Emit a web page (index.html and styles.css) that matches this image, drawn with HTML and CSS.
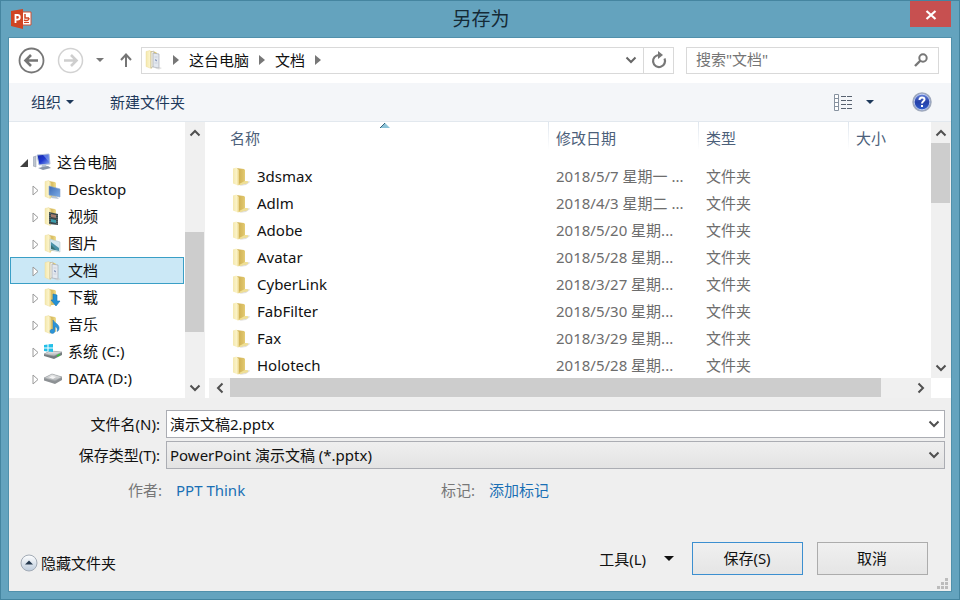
FILE: index.html
```html
<!DOCTYPE html>
<html lang="zh-CN">
  <head>
    <meta charset="utf-8">
    <title>另存为</title>
    <meta name="viewport" content="width=device-width, initial-scale=1.0">
    <link rel="stylesheet" href="styles.css">
  </head>
  <body>
    <svg class="defs" width="0" height="0" aria-hidden="true">
      <defs>
        <linearGradient id="g-back" x1="0" x2="1"><stop offset="0" stop-color="#f4e8ae"/><stop offset=".6" stop-color="#fbf3c8"/><stop offset="1" stop-color="#e9d384"/></linearGradient>
        <linearGradient id="g-front" x1="0" x2="1"><stop offset="0" stop-color="#c9a94a"/><stop offset=".6" stop-color="#ddc268"/><stop offset="1" stop-color="#f1e093"/></linearGradient>
        <linearGradient id="g-screen" x1="0" x2="1" y2="1"><stop offset="0" stop-color="#1324a4"/><stop offset=".5" stop-color="#2039cf"/><stop offset="1" stop-color="#93b8f0"/></linearGradient>
        <linearGradient id="g-desk" x1="0" x2="1" y2="1"><stop offset="0" stop-color="#3c69b4"/><stop offset="1" stop-color="#7eaee8"/></linearGradient>
        <linearGradient id="g-help" x2="0" y2="1"><stop offset="0" stop-color="#6f8ce0"/><stop offset=".5" stop-color="#2440a8"/><stop offset="1" stop-color="#2f5fd0"/></linearGradient>
        <linearGradient id="g-disk" x2="0" y2="1"><stop offset="0" stop-color="#f0f0f0"/><stop offset="1" stop-color="#a9adb0"/></linearGradient>
        <linearGradient id="g-round" x2="0" y2="1"><stop offset="0" stop-color="#ffffff"/><stop offset="1" stop-color="#bccbdc"/></linearGradient>
      </defs>
      <symbol id="folder" viewBox="0 0 18 20">
        <path d="M12 16l5-2 1 1-4 3-7 1z" fill="#cfccc4" opacity=".6"/>
        <path d="M4 1l8 1 1 1v11l3 .500v1.500L7 18H5z" fill="url(#g-front)"/>
        <path d="M7 17l6-3 3 .500v1.500l-8 2z" fill="#efdf96"/>
        <path d="M1 1.500L4.500.500 7 3v15l-1 .500-5-2z" fill="url(#g-back)"/>
      </symbol>
      <symbol id="base" viewBox="0 0 18 20">
        <path d="M4 1l7 1 1 1v14H5z" fill="url(#g-front)"/>
        <path d="M1 1.500L5 .500 7 3v15l-1 .500-5-2z" fill="url(#g-back)" stroke="#ead994" stroke-width=".4"/>
      </symbol>
      <symbol id="docs" viewBox="0 0 18 20">
        <use href="#base"/>
        <path d="M6 2l3-1v15l-3 2z" fill="#f5f2e2" stroke="#aaa79a" stroke-width=".5"/>
        <path d="M8 3l6 1v14l-6-1z" fill="#e3e8ef" stroke="#9aa0aa" stroke-width=".6"/>
        <path d="M9.500 7h3M9.500 13h3" stroke="#ccd1da"/>
        <path d="M10 9l2 1v1.500l-2-1z" fill="#8c9bbd"/>
        <path d="M14 17l3 1-3 1.500-4-1z" fill="#ccc" opacity=".6"/>
      </symbol>
      <symbol id="desktop" viewBox="0 0 18 20">
        <use href="#base"/>
        <path d="M5 6l11 3v8L5 15z" fill="url(#g-desk)" stroke="#83a3cf" stroke-width=".6"/>
        <path d="M8 16l5 1 2 2-8-1z" fill="#b9c5d4"/>
      </symbol>
      <symbol id="video" viewBox="0 0 18 20">
        <use href="#base"/>
        <path d="M5 5l9 2v11l-9-1z" fill="#39474b"/>
        <path d="M7 7l5 1v3L7 10z" fill="#a27b6d"/>
        <path d="M7 12l5 1v3l-5-1z" fill="#3c9cab"/>
        <path d="M6 6v11M13 8v10" stroke="#6f7c7e" stroke-dasharray="1 1"/>
      </symbol>
      <symbol id="picture" viewBox="0 0 18 20">
        <use href="#base"/>
        <path d="M6 5l10 3v10L6 16z" fill="#d4e8f1" stroke="#b9c9cf" stroke-width=".6"/>
        <path d="M7 8l8 6v3l-8-2z" fill="#4a92a8"/>
        <path d="M7 11l5 5-5-1z" fill="#366f70"/>
      </symbol>
      <symbol id="download" viewBox="0 0 18 20">
        <use href="#base"/>
        <path d="M9 6l4 1v6h3l-4 5-5-6h2z" fill="#2491d4" stroke="#1876b4" stroke-width=".6"/>
      </symbol>
      <symbol id="music" viewBox="0 0 18 20">
        <use href="#base"/>
        <path d="M9 5c1 3 7 4 6 9-.3 1.500-1 2-2 2.500.8-2.500 0-4-2-5v4c0 4-5 3.500-5 1 0-2 1.500-2.500 3-2z" fill="#2c94d8" stroke="#2679b5" stroke-width=".5"/>
      </symbol>
      <symbol id="computer" viewBox="0 0 19 18">
        <path d="M0 4l3-1v11l-3-1z" fill="#bcc4ce" stroke="#929ba8" stroke-width=".5"/>
        <path d="M4 2l12-1 1 10-11 1z" fill="url(#g-screen)" stroke="#b6c6dc"/>
        <path d="M10 2l6-.5.500 8z" fill="#8aaaf0" opacity=".6"/>
        <path d="M9 12h4l2 3-7 1z" fill="#b7c4d3"/>
        <path d="M5 15l10-2 3 2-8 2z" fill="#8795a8"/>
      </symbol>
      <symbol id="disk" viewBox="0 0 20 13">
        <path d="M1 6l8-4 10 3v3l-7 4L1 8.500z" fill="#8d9194"/>
        <path d="M1 6l8-4 10 3-7 4z" fill="url(#g-disk)" stroke="#9b9fa2" stroke-width=".6"/>
        <path d="M6 5.500l3-1.500 4 1-3 2z" fill="#fff" opacity=".8"/>
      </symbol>
      <symbol id="win" viewBox="0 0 20 18">
        <path d="M1 11l6-3 12 1v3l-8 4-10-3z" fill="#767d80"/>
        <path d="M1 11l6-3 12 1-8 4z" fill="url(#g-disk)" stroke="#9b9fa2" stroke-width=".5"/>
        <path d="M14 13l3-1.500" stroke="#39c93c" stroke-width="1.500"/>
        <path d="M1 2l3.500-.500v3H1zM5.500 1.300L10 1v3.500H5.500zM1 5.500h3.500v3L1 8zM5.500 5.500H10V9l-4.500-.400z" fill="#22bfe8"/>
      </symbol>
      <symbol id="down" viewBox="0 0 12 8"><path d="M1.500 1.500L6 6l4.500-4.500" fill="none" stroke="currentColor" stroke-width="2"/></symbol>
      <symbol id="up" viewBox="0 0 12 8"><path d="M1.500 6.500L6 2l4.500 4.500" fill="none" stroke="currentColor" stroke-width="2"/></symbol>
      <symbol id="left" viewBox="0 0 8 12"><path d="M6.500 1.500L2 6l4.500 4.500" fill="none" stroke="currentColor" stroke-width="2"/></symbol>
      <symbol id="right" viewBox="0 0 8 12"><path d="M1.500 1.500L6 6l-4.500 4.500" fill="none" stroke="currentColor" stroke-width="2"/></symbol>
      <symbol id="caret" viewBox="0 0 8 4"><path d="M0 0h8L4 4z" fill="currentColor"/></symbol>
      <symbol id="crumb" viewBox="0 0 6 10"><path d="M0 0l6 5-6 5z" fill="#777"/></symbol>
      <symbol id="closed" viewBox="0 0 7 11"><path d="M1 1l5 4.500L1 10z" fill="#fff" stroke="#9a9a9a"/></symbol>
      <symbol id="open" viewBox="0 0 8 8"><path d="M8 0v8H0z" fill="#404040"/></symbol>
    </svg>

    <div class="window">
      <header class="titlebar">
        <svg class="app-icon" width="21" height="20" viewBox="0 0 21 20">
          <path d="M11 3h9v13h-9z" fill="#fff" stroke="#d25033"/>
          <path d="M14 5v4h4M18 9c0 3-3 3-5 2" fill="none" stroke="#d04525" stroke-width="1.500"/>
          <path d="M13 13.500h5" stroke="#d04525"/>
          <path d="M0 2l12-2v20L0 17z" fill="#d04423"/>
          <path d="M4.500 14V6h2a2.300 2.300 0 0 1 0 4.600h-2" fill="none" stroke="#fff" stroke-width="1.800"/>
        </svg>
        <h1>另存为</h1>
        <button class="close" aria-label="关闭"><svg width="12" height="10" viewBox="0 0 12 10"><path d="M1.500 1l9 8M10.500 1l-9 8" stroke="#fff" stroke-width="2.200"/></svg></button>
      </header>

      <main class="content">
        <nav class="navbar">
          <button class="plain" aria-label="后退"><svg width="27" height="27" viewBox="0 0 27 27"><circle cx="13.500" cy="13.500" r="12" fill="#fff" stroke="#777" stroke-width="1.800"/><path d="M20 13.500H8M13 8l-5.500 5.500L13 19" fill="none" stroke="#757575" stroke-width="2.600"/></svg></button>
          <button class="plain forward" aria-label="前进"><svg width="27" height="27" viewBox="0 0 27 27"><circle cx="13.500" cy="13.500" r="12" fill="#fff" stroke="#d2d2d2" stroke-width="1.500"/><path d="M7 13.500h12M14 8l5.500 5.500L14 19" fill="none" stroke="#cecece" stroke-width="2.600"/></svg></button>
          <button class="plain recent" aria-label="最近位置"><svg width="8" height="4"><use href="#caret"/></svg></button>
          <button class="plain parent" aria-label="上移"><svg width="12" height="14" viewBox="0 0 12 14"><path d="M6 14V2M1 7l5-5.500L11 7" fill="none" stroke="#757575" stroke-width="2"/></svg></button>
          <div class="address">
            <svg width="18" height="20"><use href="#docs"/></svg>
            <svg width="6" height="10"><use href="#crumb"/></svg>
            <a href="#">这台电脑</a>
            <svg width="6" height="10"><use href="#crumb"/></svg>
            <a href="#">文档</a>
            <svg width="6" height="10"><use href="#crumb"/></svg>
            <button class="plain history" aria-label="以前的位置"><svg width="12" height="8"><use href="#down"/></svg></button>
            <button class="plain refresh" aria-label="刷新"><svg width="16" height="18" viewBox="0 0 16 18"><path d="M13.500 7.500A6 6 0 1 1 8 4" fill="none" stroke="#777" stroke-width="2.200"/><path d="M7 0l5 4-5 4z" fill="#777"/></svg></button>
          </div>
          <div class="search">
            <input type="text" aria-label="搜索" placeholder='搜索"文档"'>
            <svg width="14" height="14" viewBox="0 0 14 14"><circle cx="9" cy="5" r="3.700" fill="none" stroke="#777" stroke-width="2"/><path d="M6.500 7.500L1 13" stroke="#777" stroke-width="2.400"/></svg>
          </div>
        </nav>

        <div class="toolbar">
          <button class="plain">组织 <svg width="8" height="4"><use href="#caret"/></svg></button>
          <button class="plain create">新建文件夹</button>
          <button class="plain view" aria-label="更改视图">
            <svg width="20" height="17" viewBox="0 0 20 17"><path d="M1.500.500h4v16h-4zM1 4.500h5M1 8.500h5M1 12.500h5" fill="#fff" stroke="#8792a0"/><path d="M8 2.500h12M8 6.500h12M8 10.500h12M8 14.500h12" stroke="#586270" stroke-dasharray="5 1"/></svg>
            <svg width="8" height="4"><use href="#caret"/></svg>
          </button>
          <button class="plain help" aria-label="帮助"><svg width="20" height="20" viewBox="0 0 20 20"><circle cx="10" cy="10" r="9" fill="url(#g-help)" stroke="#9fa9bc" stroke-width="1.500"/><circle cx="10" cy="10" r="7.800" fill="none" stroke="#dce5fa" stroke-width=".8"/><path d="M7.500 8c0-3.500 5-3.300 5-.5 0 1.800-2.500 1.800-2.500 4" fill="none" stroke="#fff" stroke-width="2"/><path d="M9 13h2v2H9z" fill="#fff"/></svg></button>
        </div>

        <div class="panes">
          <div class="tree-pane">
            <ul class="tree">
              <li class="root"><svg width="8" height="8"><use href="#open"/></svg><svg width="19" height="18"><use href="#computer"/></svg>这台电脑</li>
              <li><svg width="7" height="11"><use href="#closed"/></svg><svg class="icon" width="18" height="20"><use href="#desktop"/></svg>Desktop</li>
              <li><svg width="7" height="11"><use href="#closed"/></svg><svg class="icon" width="18" height="20"><use href="#video"/></svg>视频</li>
              <li><svg width="7" height="11"><use href="#closed"/></svg><svg class="icon" width="18" height="20"><use href="#picture"/></svg>图片</li>
              <li class="selected"><svg width="7" height="11"><use href="#closed"/></svg><svg class="icon" width="18" height="20"><use href="#docs"/></svg>文档</li>
              <li><svg width="7" height="11"><use href="#closed"/></svg><svg class="icon" width="18" height="20"><use href="#download"/></svg>下载</li>
              <li><svg width="7" height="11"><use href="#closed"/></svg><svg class="icon" width="18" height="20"><use href="#music"/></svg>音乐</li>
              <li><svg width="7" height="11"><use href="#closed"/></svg><svg class="icon" width="20" height="18"><use href="#win"/></svg>系统 (C:)</li>
              <li><svg width="7" height="11"><use href="#closed"/></svg><svg class="icon" width="20" height="13"><use href="#disk"/></svg>DATA (D:)</li>
            </ul>
            <div class="vscroll">
              <button class="plain" aria-label="向上滚动"><svg width="12" height="8"><use href="#up"/></svg></button>
              <div class="track tree-track"><div class="thumb"></div></div>
              <button class="plain" aria-label="向下滚动"><svg width="12" height="8"><use href="#down"/></svg></button>
            </div>
          </div>

          <div class="list-pane">
            <div class="files">
              <table>
                <thead>
                  <tr>
                    <th class="name">名称<svg class="sort" width="10" height="5" viewBox="0 0 10 5"><path d="M0 5l5-5 5 5z" fill="#8cc3d8"/><path d="M0 5l5-5" stroke="#39647c"/></svg></th>
                    <th class="date">修改日期</th>
                    <th class="type">类型</th>
                    <th>大小</th>
                  </tr>
                </thead>
                <tbody>
                  <tr><td><svg width="18" height="20"><use href="#folder"/></svg>3dsmax</td><td>2018/5/7 星期一 ...</td><td>文件夹</td><td></td></tr>
                  <tr><td><svg width="18" height="20"><use href="#folder"/></svg>Adlm</td><td>2018/4/3 星期二 ...</td><td>文件夹</td><td></td></tr>
                  <tr><td><svg width="18" height="20"><use href="#folder"/></svg>Adobe</td><td>2018/5/20 星期...</td><td>文件夹</td><td></td></tr>
                  <tr><td><svg width="18" height="20"><use href="#folder"/></svg>Avatar</td><td>2018/5/28 星期...</td><td>文件夹</td><td></td></tr>
                  <tr><td><svg width="18" height="20"><use href="#folder"/></svg>CyberLink</td><td>2018/3/27 星期...</td><td>文件夹</td><td></td></tr>
                  <tr><td><svg width="18" height="20"><use href="#folder"/></svg>FabFilter</td><td>2018/5/30 星期...</td><td>文件夹</td><td></td></tr>
                  <tr><td><svg width="18" height="20"><use href="#folder"/></svg>Fax</td><td>2018/3/29 星期...</td><td>文件夹</td><td></td></tr>
                  <tr><td><svg width="18" height="20"><use href="#folder"/></svg>Holotech</td><td>2018/5/28 星期...</td><td>文件夹</td><td></td></tr>
                </tbody>
              </table>
            </div>
            <div class="vscroll">
              <button class="plain" aria-label="向上滚动"><svg width="12" height="8"><use href="#up"/></svg></button>
              <div class="track list-track"><div class="thumb"></div></div>
              <button class="plain" aria-label="向下滚动"><svg width="12" height="8"><use href="#down"/></svg></button>
            </div>
            <div class="hscroll">
              <button class="plain" aria-label="向左滚动"><svg width="8" height="12"><use href="#left"/></svg></button>
              <div class="track"><div class="thumb"></div></div>
              <button class="plain" aria-label="向右滚动"><svg width="8" height="12"><use href="#right"/></svg></button>
            </div>
          </div>
        </div>

        <form class="details">
          <div class="fields">
            <label for="filename">文件名(N):</label>
            <div class="combo">
              <input type="text" id="filename" value="演示文稿2.pptx">
              <svg width="12" height="8"><use href="#down"/></svg>
            </div>
            <label for="filetype">保存类型(T):</label>
            <div class="combo">
              <select id="filetype"><option>PowerPoint 演示文稿 (*.pptx)</option></select>
              <svg width="12" height="8"><use href="#down"/></svg>
            </div>
          </div>
          <dl class="meta">
            <dt>作者:</dt><dd><a href="#">PPT Think</a></dd>
            <dt>标记:</dt><dd><a href="#">添加标记</a></dd>
          </dl>
          <div class="actions">
            <button type="button" class="plain hide"><svg width="18" height="18" viewBox="0 0 18 18"><circle cx="9" cy="9" r="8" fill="url(#g-round)" stroke="#a2abb6"/><path d="M5 10.500L9 6.500l4 4z" fill="#24384e"/></svg>隐藏文件夹</button>
            <button type="button" class="plain tools">工具(L)<svg width="10" height="5"><use href="#caret"/></svg></button>
            <button type="button" class="push default">保存(S)</button>
            <button type="button" class="push">取消</button>
          </div>
          <svg class="grip" width="11" height="11" viewBox="0 0 11 11"><path d="M8 0h3v3H8zM4 4h3v3H4zM8 4h3v3H8zM0 8h3v3H0zM4 8h3v3H4zM8 8h3v3H8z" fill="#bcbcbc"/></svg>
        </form>
      </main>
    </div>
  </body>
</html>
```

FILE: styles.css
```css
* {
  box-sizing:border-box;
}

body {
  margin:0;
  color:#111;
  font:15px/20px 'Noto Sans', 'Noto Sans CJK SC', sans-serif;
}

svg {
  flex:none;
}

a {
  color:#1a6fb5;
  text-decoration:none;
}

button, input, select {
  font:inherit;
  color:inherit;
}

.defs {
  position:absolute;
}

.window {
  display:flex;
  flex-direction:column;
  min-height:100vh;
  padding:0 8px 8px;
  background:#64a3be;
  border:1px solid #4585a0;
}

.titlebar {
  display:grid;
  grid-template-columns:1fr auto 1fr;
  height:37px;
  padding-left:2px;
}

.titlebar h1 {
  margin:0;
  color:#152a36;
  font-size:19px;
  font-weight:normal;
  line-height:36px;
}

.app-icon {
  margin-top:8px;
}

.close {
  width:41px;
  height:26px;
  padding:0;
  justify-self:end;
  background:#c75050;
  border:0;
}

.content {
  display:flex;
  flex-direction:column;
  flex:1;
  background:#efefef;
  outline:1px solid #5190ab;
}

.plain {
  display:flex;
  align-items:center;
  padding:0;
  border:0;
  background:none;
}

.navbar {
  display:flex;
  align-items:center;
  height:45px;
  padding:0 12px 1px 9px;
  background:#fff;
}

.forward {
  margin:0 12px;
}

.recent {
  color:#777;
}

.parent {
  margin:0 9px 0 16px;
}

.address {
  display:flex;
  align-items:center;
  flex:1;
  height:27px;
  padding-left:3px;
  border:1px solid #d9d9d9;
}

.address a {
  margin:0 10px 1px;
  color:#111;
}

.address svg:first-child {
  margin-right:10px;
}

.history {
  width:24px;
  justify-content:center;
  margin-left:auto;
  color:#666;
}

.address .refresh {
  width:30px;
  height:25px;
  justify-content:center;
  border-left:1px solid #d9d9d9;
}

.refresh svg:first-child {
  margin:0;
}

.history svg:first-child {
  margin:0;
}

.search {
  display:flex;
  align-items:center;
  width:253px;
  height:27px;
  margin-left:12px;
  padding:0 10px 0 9px;
  border:1px solid #d9d9d9;
}

.search input {
  flex:1;
  min-width:0;
  padding:0 0 2px;
  border:0;
  outline:0;
}

.search input::placeholder {
  color:#757575;
}

.toolbar {
  display:flex;
  align-items:center;
  height:39px;
  padding:0 19px 0 22px;
  color:#1e395b;
  background:#f4f6f9;
  border-bottom:1px solid #e2e8ee;
}

.toolbar .plain {
  gap:5px;
}

.toolbar .create {
  margin-left:36px;
}

.toolbar .view {
  gap:13px;
  margin-left:auto;
}

.toolbar .help {
  margin-left:38px;
}

.panes {
  display:flex;
  height:276px;
  background:#fff;
}

.tree-pane {
  display:flex;
  width:196px;
}

.tree {
  flex:1;
  margin:0;
  padding:27px 1px 0;
  list-style:none;
}

.tree li {
  display:flex;
  align-items:center;
  height:27px;
  padding:0 0 2px 21px;
  border:1px solid transparent;
}

.tree li svg:first-child {
  margin-top:3px;
}

.tree .root {
  gap:5px;
  padding-left:9px;
}

.tree .icon {
  margin:2px 5px 0 4px;
  width:20px;
}

.tree .selected {
  background:#cbe8f6;
  border-color:#3a9fc6;
}

.vscroll {
  display:flex;
  flex-direction:column;
  width:20px;
  padding-right:1px;
  background:#f0f0f0;
  color:#505050;
}

.vscroll .plain {
  height:21px;
  justify-content:center;
}

.track {
  flex:1;
}

.thumb {
  background:#cdcdcd;
}

.tree-track {
  padding-top:89px;
}

.tree-track .thumb {
  height:100px;
}

.list-track .thumb {
  height:60px;
}

.list-pane {
  display:grid;
  grid-template-columns:1fr 20px;
  grid-template-rows:1fr 20px;
  flex:1;
  min-width:0;
  margin-left:4px;
}

.files {
  min-height:0;
  overflow:hidden;
}

.files table {
  width:100%;
  table-layout:fixed;
  border-collapse:collapse;
}

.files th {
  position:relative;
  height:41px;
  padding:6px 0 0 7px;
  color:#4c607a;
  font-weight:normal;
  text-align:left;
  vertical-align:top;
  background:linear-gradient(#dfe6ee, #fff) right top / 1px 28px no-repeat;
}

.files th:last-child {
  background:none;
}

.files .name {
  width:340px;
  padding-left:21px;
}

.files .date, .files .type {
  width:150px;
}

.sort {
  position:absolute;
  top:1px;
  left:calc(50% + 1px);
}

.files td {
  height:27px;
  padding:0 0 2px 7px;
  color:#6d6d6d;
  white-space:nowrap;
}

.files td:first-child {
  padding:0 0 0 23px;
  color:#111;
}

.files td svg {
  margin-right:7px;
  vertical-align:middle;
}

.hscroll {
  display:flex;
  background:#f0f0f0;
  color:#505050;
}

.hscroll .plain {
  width:21px;
  justify-content:center;
}

.hscroll .track {
  padding-right:29px;
}

.hscroll .thumb {
  height:19px;
}

.details {
  position:relative;
  display:flex;
  flex-direction:column;
  flex:1;
  padding:12px 6px 16px 0;
}

.fields {
  display:grid;
  grid-template-columns:151px 1fr;
  gap:3px 6px;
  align-items:center;
}

.fields label {
  text-align:right;
}

.combo {
  position:relative;
}

.combo input, .combo select {
  display:block;
  width:100%;
  height:28px;
  padding:0 24px 0 3px;
  border:1px solid #abadb3;
  border-radius:0;
  background:#fff;
  appearance:none;
}

.combo input {
  padding-bottom:2px;
}

.combo select {
  background:linear-gradient(#efefef, #e3e3e3);
}

.combo svg {
  position:absolute;
  top:10px;
  right:5px;
  color:#505050;
  pointer-events:none;
}

.meta {
  display:grid;
  grid-template-columns:153px 153px 160px 1fr;
  margin:11px 0 0;
}

.meta dt {
  color:#777;
  text-align:right;
}

.meta dd {
  margin:0;
  padding-left:14px;
}

.actions {
  display:flex;
  align-items:center;
  margin-top:auto;
  padding:0 17px 0 11px;
}

.hide {
  gap:3px;
  margin:8px auto 0 0;
}

.tools {
  gap:18px;
  margin-right:18px;
}

.push {
  width:111px;
  height:33px;
  padding:0 1px 2px 0;
  background:linear-gradient(#f0f0f0, #e5e5e5);
  border:1px solid #acacac;
}

.default {
  margin-right:14px;
  border-color:#3c8fd0;
}

.grip {
  position:absolute;
  right:3px;
  bottom:2px;
}
```
